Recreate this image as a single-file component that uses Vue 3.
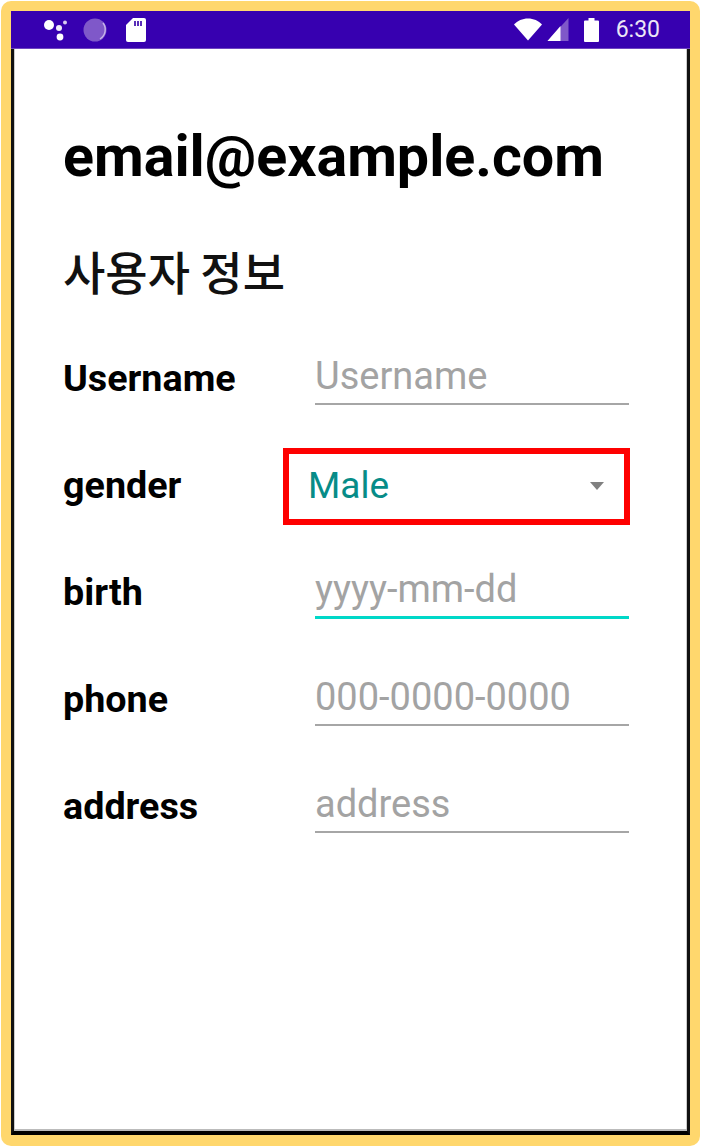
<template>
  <div class="frame">
    <div class="phone">
      <header class="statusbar">
        <div class="status-left">
          <svg class="ic-dots" width="26" height="22" viewBox="0 0 26 22" aria-hidden="true">
            <circle cx="6" cy="6" r="5" fill="#fff" />
            <circle cx="16" cy="9" r="3" fill="#f1ecfa" />
            <circle cx="22" cy="3.5" r="2" fill="#d9cdf0" />
            <circle cx="17" cy="18" r="3.4" fill="#fff" />
          </svg>
          <svg class="ic-disc" width="24" height="24" viewBox="0 0 24 24" aria-hidden="true">
            <circle cx="12" cy="12" r="11.5" fill="#7f58c9" />
            <path d="M20 5a11 11 0 0 1-3 16" fill="none" stroke="#c7b5ea" stroke-width="1.4" />
          </svg>
          <svg class="ic-sd" width="20" height="24" viewBox="0 0 20 24" aria-hidden="true">
            <path d="M7 0h11a2 2 0 0 1 2 2v20a2 2 0 0 1-2 2H2a2 2 0 0 1-2-2V7z" fill="#fff" />
            <path d="M8 3h2v5H8zM11 3h2v5h-2zM14 3h2v5h-2z" fill="#5a2fb8" />
          </svg>
        </div>
        <div class="status-right">
          <svg class="ic-wifi" width="30" height="23" viewBox="0 0 29 23" aria-hidden="true">
            <path d="M14.500 22.500 0.500 6.500C4 2.700 9 .5 14.500.5S25 2.700 28.500 6.500z" fill="#fff" />
          </svg>
          <svg class="ic-signal" width="22" height="23" viewBox="0 0 21 23" aria-hidden="true">
            <path d="M21 0v23H0z" fill="#7f58c9" />
            <path d="M13 8v15H0z" fill="#fff" />
          </svg>
          <svg class="ic-battery" width="15" height="24" viewBox="0 0 15 24" aria-hidden="true">
            <path d="M4.500 0h6v2.500H14a1 1 0 0 1 1 1V23a1 1 0 0 1-1 1H1a1 1 0 0 1-1-1V3.500a1 1 0 0 1 1-1h3.500z" fill="#fff" />
          </svg>
          <span class="clock">6:30</span>
        </div>
      </header>

      <main class="content">
        <h1 class="email">email@example.com</h1>
        <h2 class="section">사용자 정보</h2>

        <div class="form">
          <div v-for="row in rows" :key="row.label" class="row">
            <label class="label">{{ row.label }}</label>
            <div v-if="row.select" class="spinner">
              <span class="spinner-value">{{ row.value }}</span>
              <span class="caret"></span>
            </div>
            <input
              v-else
              class="input"
              :class="{ focused: row.focused }"
              type="text"
              :placeholder="row.placeholder"
            />
          </div>
        </div>
      </main>
    </div>
  </div>
</template>

<script setup>
const rows = [
  { label: 'Username', placeholder: 'Username' },
  { label: 'gender', select: true, value: 'Male' },
  { label: 'birth', placeholder: 'yyyy-mm-dd', focused: true },
  { label: 'phone', placeholder: '000-0000-0000' },
  { label: 'address', placeholder: 'address' },
];
</script>

<style>
html, body { margin: 0; background: #fff; }
</style>

<style scoped>
.frame {
  box-sizing: border-box;
  width: 699px;
  height: 1145px;
  margin: 1px;
  padding: 10px 10px 11px 10px;
  background: #ffd76d;
  border-radius: 10px;
  font-family: Roboto, "Noto Sans CJK KR", sans-serif;
}
.phone {
  box-sizing: border-box;
  height: 100%;
  background: #fff;
  border-left: 3px solid #111;
  border-right: 3px solid #111;
  border-bottom: 4px solid #000;
  box-shadow: inset 0 -2px 0 #bbb, inset 1px 0 0 #ccc, inset -1px 0 0 #ccc;
}
.statusbar {
  box-sizing: border-box;
  height: 38px;
  margin: 0 -3px;
  padding: 0 30px 0 32px;
  background: #3700b0;
  border-bottom: 1px solid #6f45c0;
  display: flex;
  align-items: center;
  justify-content: space-between;
}
.status-left, .status-right { display: flex; align-items: center; }
.ic-dots { margin-right: 14px; }
.ic-disc { margin-right: 19px; }
.ic-wifi { margin-right: 4px; }
.ic-signal { margin-right: 15px; }
.ic-battery { margin-right: 17px; }
.clock { color: #ece6f6; font-size: 23px; line-height: 1; }

.content { padding: 74px 58px 0 49px; }
.email {
  margin: 0;
  font-size: 57.4px;
  line-height: 68px;
  font-weight: 700;
  color: #000;
}
.section {
  margin: 49px 0 0;
  font-family: "Noto Sans CJK KR", sans-serif;
  font-size: 46px;
  line-height: 60px;
  font-weight: 500;
  color: #111;
}
.form { margin-top: 24px; }
.row {
  display: grid;
  grid-template-columns: 252px 1fr;
  align-items: center;
  height: 107px;
}
.label { font-size: 37.7px; font-weight: 700; color: #000; }
.input {
  box-sizing: border-box;
  width: 100%;
  height: 54px;
  padding: 0 0 2px;
  border: 0;
  border-bottom: 2px solid #a6a6a6;
  outline: none;
  background: transparent;
  font-family: inherit;
  font-size: 38px;
  color: #000;
}
.input::placeholder { color: #a3a3a3; opacity: 1; }
.input.focused { border-bottom: 3px solid #00d8c8; }
.spinner {
  box-sizing: border-box;
  height: 77px;
  margin: 4px -1px 0 -32px;
  padding: 0 20px 2px 19px;
  border: 6px solid #fe0000;
  display: flex;
  align-items: center;
  justify-content: space-between;
}
.spinner-value { font-size: 37px; color: #078c88; }
.caret {
  width: 0;
  height: 0;
  border-left: 7.5px solid transparent;
  border-right: 7.5px solid transparent;
  border-top: 8px solid #808080;
}
</style>
